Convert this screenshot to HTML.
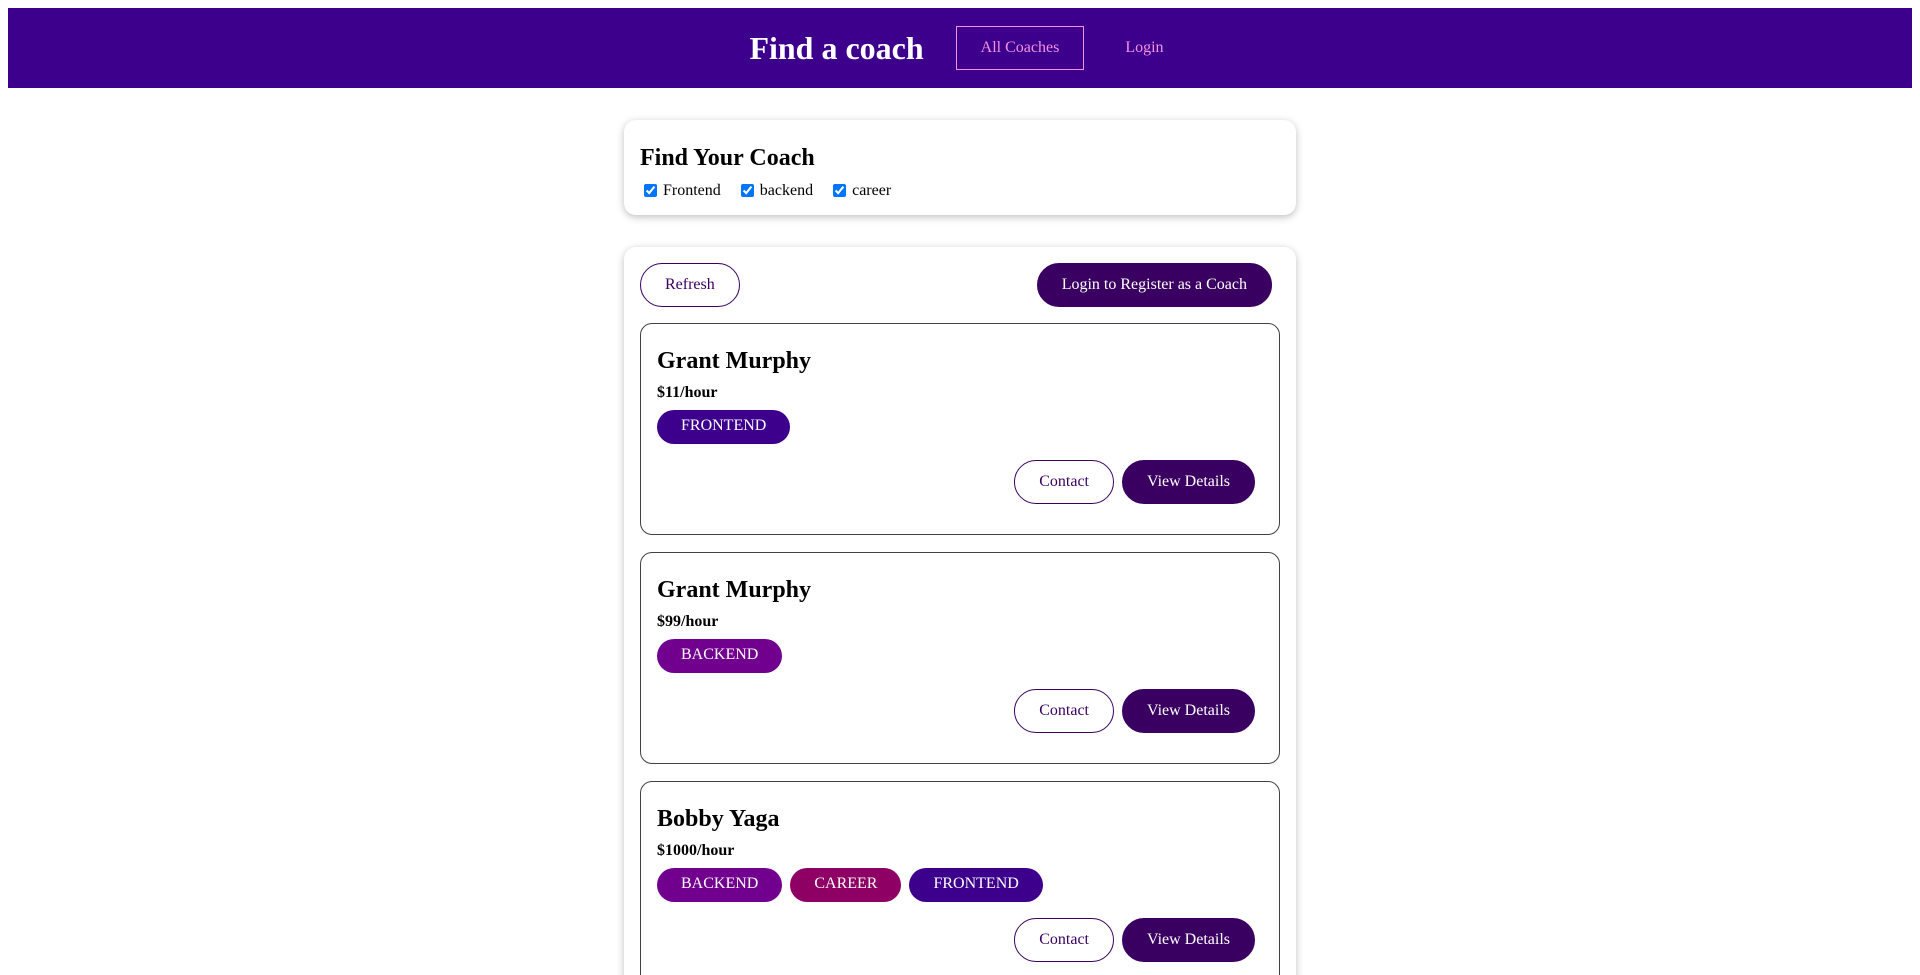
<!DOCTYPE html>
<html><head><meta charset="utf-8"><style>
*{box-sizing:border-box}
html{overflow:hidden;height:975px}
body{margin:8px;font-family:"Liberation Serif",serif;font-size:16px;background:#fff;overflow:hidden;height:959px}
header{height:80px;background:#3d008d;display:flex;justify-content:center;align-items:center;padding-left:26px}
header h1{color:#fff;font-size:32px;margin:0 24px 0 0;font-weight:bold}
header a{display:inline-block;color:#f391e2;text-decoration:none;padding:12px 24px;border:1px solid transparent;margin:0 8px;line-height:18.4px}
header a.act{border-color:#f391e2}
.card{width:672px;margin:32px auto;border-radius:12px;box-shadow:0 2px 8px rgba(0,0,0,.26);padding:16px;background:#fff}
.card h2{margin:9px 0 8px;font-size:24px;line-height:27.6px}
.filters{display:flex;align-items:center;height:20px}
.filters label{margin-right:16px;display:flex;align-items:center}
.filters input{margin:0 6px 0 4px;width:13px;height:13px;accent-color:#0075ff}
.controls{display:flex;justify-content:space-between;padding-right:8px}
.btn{display:inline-block;padding:12px 24px;border:1px solid #3a0061;border-radius:30px;color:#3a0061;background:#fff;line-height:18.4px;font-size:16px}
.btn.f{background:#3a0061;color:#fff}
.item{border:1px solid #424242;border-radius:12px;padding:16px;margin:16px 0 17px;height:212px}
.item h3{font-size:24px;line-height:27.6px;margin:8px 0 8px}
.item h4{font-size:16px;line-height:18.4px;margin:0 0 8px}
.badge{display:inline-block;color:#fff;padding:7px 24px 8px;border-radius:30px;margin-right:4px;line-height:18.4px}
.b{background:#71008f}.c{background:#8f0064}.fr{background:#3d008d}
.act2{display:flex;justify-content:flex-end;margin-top:16px;padding-right:8px}
.act2 .btn{margin-left:8px}
</style></head><body>
<header><h1>Find a coach</h1><a class="act">All Coaches</a><a>Login</a></header>
<div class="card" style="margin-top:32px;height:95px;padding-top:16px">
<h2>Find Your Coach</h2>
<div class="filters"><label><input type="checkbox" checked>Frontend</label><label><input type="checkbox" checked>backend</label><label><input type="checkbox" checked>career</label></div>
</div>
<div class="card" style="margin-top:32px;height:800px">
<div class="controls"><span class="btn">Refresh</span><span class="btn f">Login to Register as a Coach</span></div>
<div class="item"><h3>Grant Murphy</h3><h4>$11/hour</h4><div><span class="badge fr">FRONTEND</span></div><div class="act2"><span class="btn">Contact</span><span class="btn f">View Details</span></div></div>
<div class="item"><h3>Grant Murphy</h3><h4>$99/hour</h4><div><span class="badge b">BACKEND</span></div><div class="act2"><span class="btn">Contact</span><span class="btn f">View Details</span></div></div>
<div class="item"><h3>Bobby Yaga</h3><h4>$1000/hour</h4><div><span class="badge b">BACKEND</span> <span class="badge c">CAREER</span> <span class="badge fr">FRONTEND</span></div><div class="act2"><span class="btn">Contact</span><span class="btn f">View Details</span></div></div>
</div>
</body></html>
